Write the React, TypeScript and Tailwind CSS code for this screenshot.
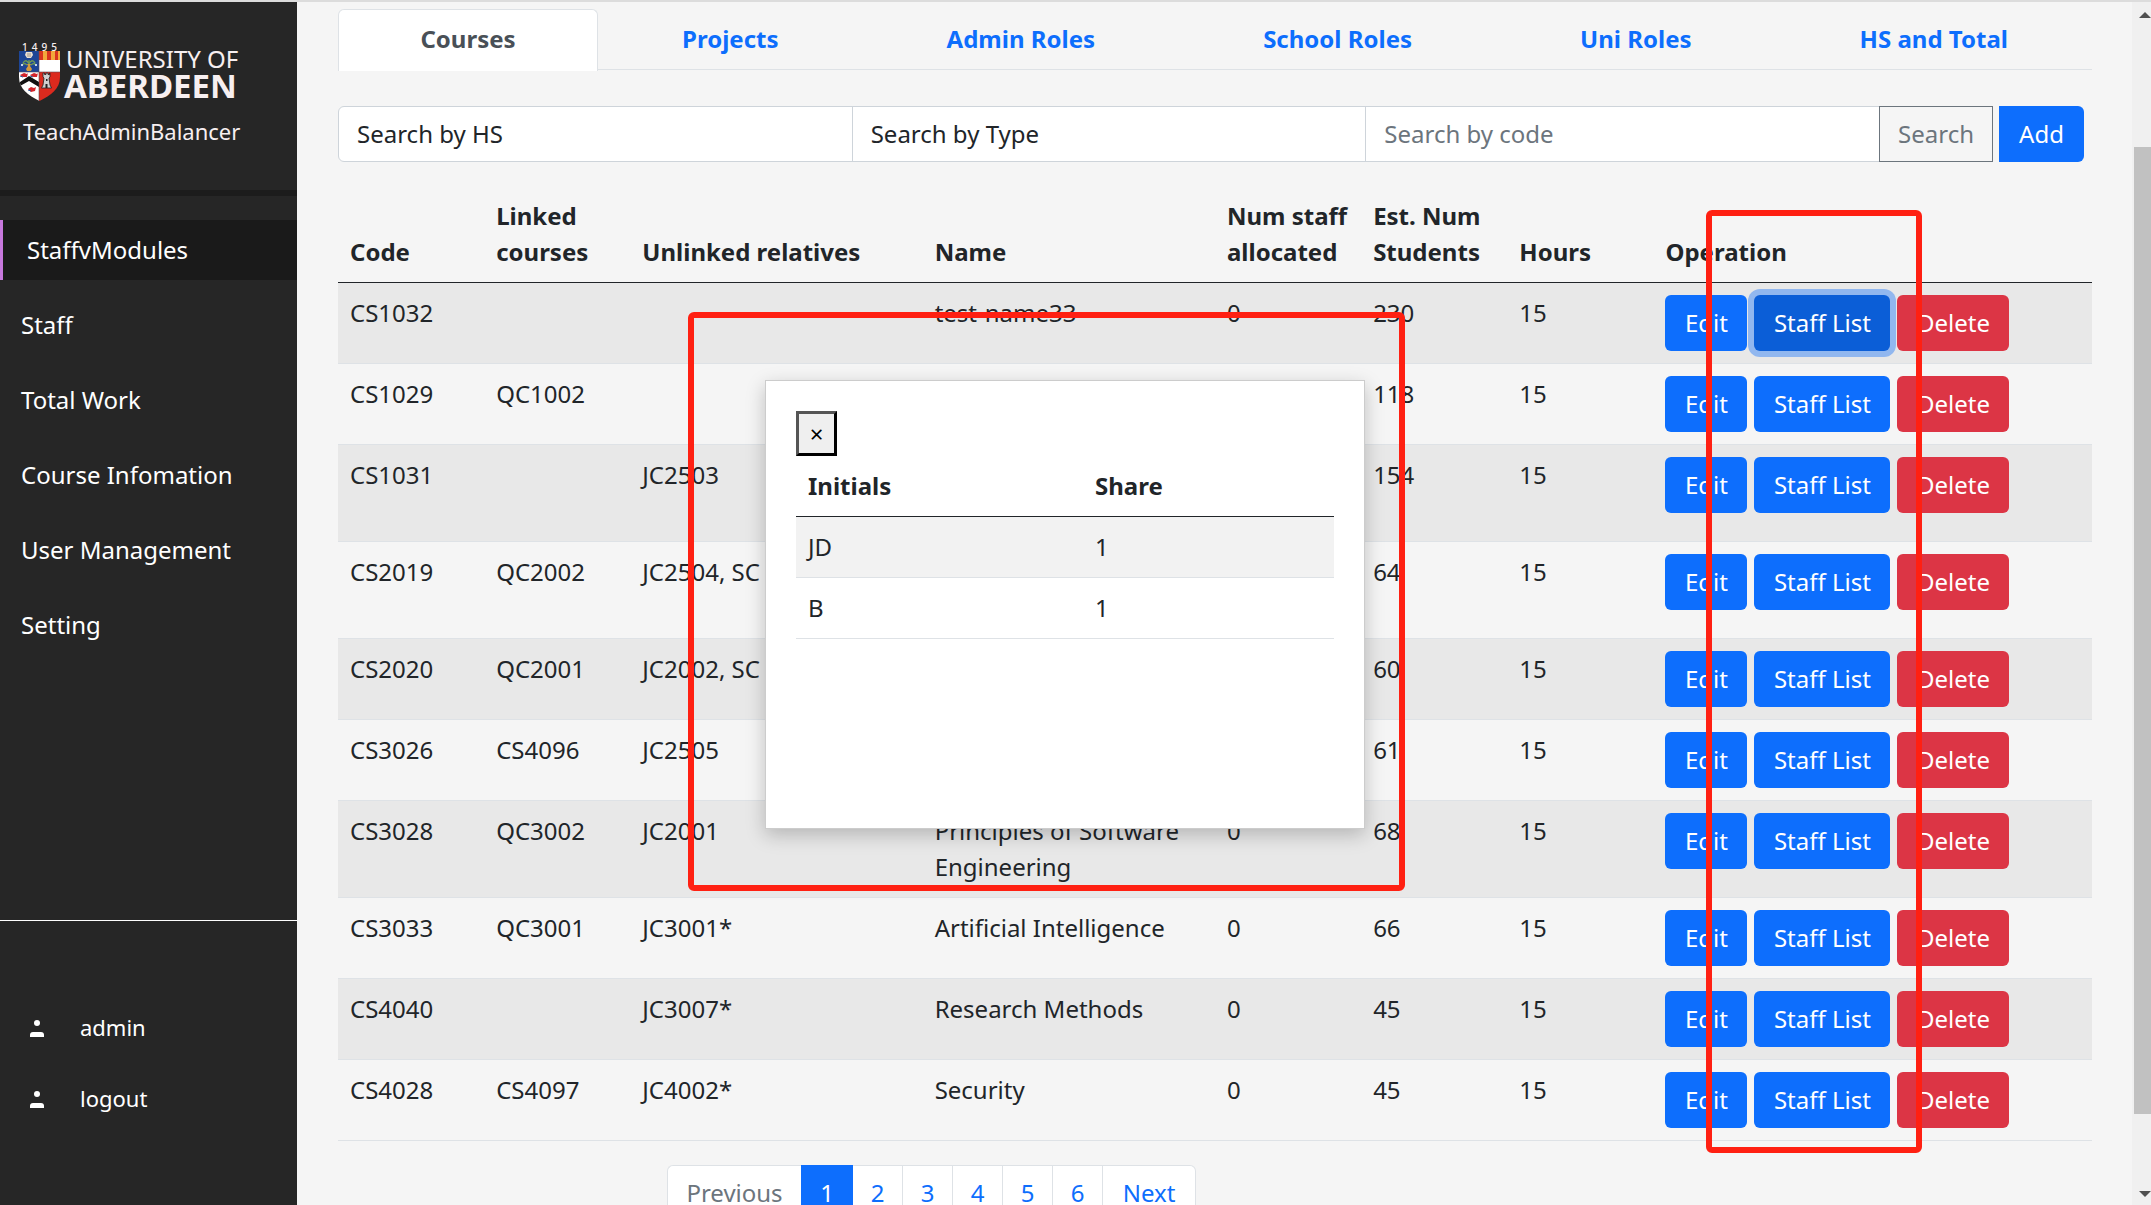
import React from "react";

type Course = {
  code: string;
  linked: string;
  unlinked: string;
  name: string;
  students: number;
  tall?: boolean;
};

const courses: Course[] = [
  { code: "CS1032", linked: "", unlinked: "", name: "test-name33", students: 230 },
  { code: "CS1029", linked: "QC1002", unlinked: "", name: "", students: 118 },
  { code: "CS1031", linked: "", unlinked: "JC2503", name: "", students: 154, tall: true },
  { code: "CS2019", linked: "QC2002", unlinked: "JC2504, SC", name: "", students: 64, tall: true },
  { code: "CS2020", linked: "QC2001", unlinked: "JC2002, SC", name: "", students: 60 },
  { code: "CS3026", linked: "CS4096", unlinked: "JC2505", name: "", students: 61 },
  { code: "CS3028", linked: "QC3002", unlinked: "JC2001", name: "Principles of Software Engineering", students: 68 },
  { code: "CS3033", linked: "QC3001", unlinked: "JC3001*", name: "Artificial Intelligence", students: 66 },
  { code: "CS4040", linked: "", unlinked: "JC3007*", name: "Research Methods", students: 45 },
  { code: "CS4028", linked: "CS4097", unlinked: "JC4002*", name: "Security", students: 45 },
];

const tabs = ["Projects", "Admin Roles", "School Roles", "Uni Roles", "HS and Total"];
const menu = ["Staff", "Total Work", "Course Infomation", "User Management", "Setting"];

function Crest() {
  return (
    <svg viewBox="0 0 41 50" className="h-[50px] w-[41px]" aria-hidden="true">
      <defs>
        <clipPath id="shield">
          <path d="M0 0H41V26C41 38 32 44 20.500 50C9 44 0 38 0 26Z" />
        </clipPath>
      </defs>
      <g clipPath="url(#shield)">
        <rect width="21" height="21" fill="#1d4596" />
        <rect x="20" width="21" height="9" fill="#f2a73b" />
        <path d="M20 0h4v9h-4zM28 0h4v9h-4zM36 0h3v9h-3z" fill="#d8331f" />
        <rect x="20" y="9" width="21" height="12" fill="#fff" />
        <rect y="21" width="20" height="29" fill="#fff" />
        <rect x="20" y="21" width="21" height="29" fill="#dc2a1e" />
        <path d="M7 1h6l1 3-2 3H8L6 4z" fill="#eadfd2" />
        <path d="M9 2v4M11 2v4" stroke="#8f8579" strokeWidth=".8" />
        <path d="M10 13Q7 7 4 12M10 13Q13 7 16 12M10 13V9M8 14Q4 11 3 15M12 14Q16 11 17 15" stroke="#6f9a56" strokeWidth="1.300" fill="none" />
        <path d="M8 13h4l-1 2 2 3-1 2H8l-1-2 2-3z" fill="#d59a3c" />
        <path d="M2 13h2v2H2zM16 13h2v2h-2z" fill="#c6d2e6" />
        <path d="M1 35V31L10 25L20 31V36L10 30Z" fill="#111" />
        <path d="M1 24l4-2 3 1 1-1-1 4-4 0zM11 24l4-2 3 1 1-1-1 4-4 0zM9 38l3-2 3 1 2-1-1 4-4 1z" fill="#d3242b" />
        <path d="M1 25l3 1M11 25l3 1M9 39l3 1" stroke="#34558f" />
        <path d="M24 22h1.500v1.500h1.500V22h2v1.500h1.500V22H31v4l-1 1 1 7 1.500 3h-10l1.500-3 1-7-1-1z" fill="#cfcfcf" stroke="#222" strokeWidth=".8" />
        <path d="M26.500 33h2v4h-2zM27 28h1.500v2H27z" fill="#222" />
        <path d="M20 0V50M0 21H41" stroke="#5a4a55" strokeWidth=".6" />
      </g>
    </svg>
  );
}

function Person() {
  return (
    <svg viewBox="0 0 14 17" className="mt-1 h-[17px] w-[14px]" fill="#fff" aria-hidden="true">
      <circle cx="7" cy="3" r="3" />
      <path d="M0 17V15Q0 12 3 12H11Q14 12 14 15V17Z" />
    </svg>
  );
}

function Sidebar() {
  return (
    <aside className="flex w-[297px] shrink-0 flex-col bg-[#262626] text-white">
      <div className="h-[194px] border-b-[6px] border-[#1c1c1c] pt-[41px] pl-[19px] text-[#f7eff0]">
        <div className="flex h-[58px] items-end gap-1">
          <div className="flex flex-col">
            <span className="flex h-2 items-center justify-between px-[3px] text-[10px] leading-none font-medium">
              <span>1</span>
              <span>4</span>
              <span>9</span>
              <span>5</span>
            </span>
            <Crest />
          </div>
          <div className="flex flex-col whitespace-nowrap">
            <span className="pl-[2px] text-[24px] leading-6">UNIVERSITY OF</span>
            <span className="text-[33px] leading-[30px] font-bold">ABERDEEN</span>
          </div>
        </div>
        <p className="mt-3 pl-1 text-[22px] leading-9">TeachAdminBalancer</p>
      </div>
      <nav className="flex flex-1 flex-col pt-6">
        <a href="#staffvmodules" className="flex h-[60px] items-center border-l-[3px] border-[#c678dd] bg-[#1a1a1a] pl-6">
          StaffvModules
        </a>
        {menu.map((item) => (
          <a key={item} href="#menu" className="mt-[15px] flex h-[60px] items-center pl-[21px]">
            {item}
          </a>
        ))}
      </nav>
      <div className="h-[285px] border-t border-white pt-[70px] text-[22px]">
        {["admin", "logout"].map((item) => (
          <a key={item} href={"#" + item} className="flex h-[71px] items-center gap-9 pl-[30px]">
            <Person />
            {item}
          </a>
        ))}
      </div>
    </aside>
  );
}

const button = "h-14 rounded-md text-white whitespace-nowrap";
const cell = "border-b border-[#dee2e6] py-3 pl-3";
const headCell = "border-b border-[#212529] py-3 pr-0 pl-3 font-bold";

function CourseTable() {
  return (
    <table className="mt-6 w-full table-fixed border-separate border-spacing-0 text-left">
      <colgroup>
        <col className="w-1/12" />
        <col className="w-1/12" />
        <col className="w-2/12" />
        <col className="w-2/12" />
        <col className="w-1/12" />
        <col className="w-1/12" />
        <col className="w-1/12" />
        <col className="w-3/12" />
      </colgroup>
      <thead>
        <tr className="align-bottom">
          {["Code", "Linked courses", "Unlinked relatives", "Name", "Num staff allocated", "Est. Num Students", "Hours", "Operation"].map((h) => (
            <th key={h} className={headCell}>
              {h}
            </th>
          ))}
        </tr>
      </thead>
      <tbody>
        {courses.map((c, i) => (
          <tr key={c.code} className={"align-top odd:bg-[#e8e8e8] " + (c.tall ? "h-[97px]" : "h-[81px]")}>
            <td className={cell}>{c.code}</td>
            <td className={cell}>{c.linked}</td>
            <td className={cell}>{c.unlinked}</td>
            <td className={cell}>{c.name}</td>
            <td className={cell}>0</td>
            <td className={cell}>{c.students}</td>
            <td className={cell}>15</td>
            <td className={cell}>
              <div className="flex gap-[7px]">
                <button className={button + " w-[82px] bg-[#0d6efd]"}>Edit</button>
                <button className={button + (i === 0 ? " w-[136px] bg-[#0b5ed7] ring-6 ring-[#91b7ef]" : " w-[136px] bg-[#0d6efd]")}>Staff List</button>
                <button className={button + " w-[112px] bg-[#dc3545]"}>Delete</button>
              </div>
            </td>
          </tr>
        ))}
      </tbody>
    </table>
  );
}

function StaffDialog() {
  return (
    <div className="pointer-events-none absolute inset-0 top-0.5 right-[21px] flex items-center justify-center">
      <div role="dialog" aria-label="Staff list" className="pointer-events-auto h-[449px] w-[600px] border border-[#ccc] bg-white p-[30px] shadow-[0_6px_18px_rgba(0,0,0,0.22)]">
        <button aria-label="Close" className="flex h-[45px] w-[41px] items-center justify-center border-3 border-t-[#555] border-r-black border-b-black border-l-[#555] bg-[#efefef] text-[24px] text-black">
          ×
        </button>
        <table className="w-full table-fixed border-separate border-spacing-0 text-left">
          <thead>
            <tr>
              <th className={headCell + " w-[287px]"}>Initials</th>
              <th className={headCell}>Share</th>
            </tr>
          </thead>
          <tbody>
            {["JD", "B"].map((s) => (
              <tr key={s} className="odd:bg-[#f2f2f2]">
                <td className={cell}>{s}</td>
                <td className={cell}>1</td>
              </tr>
            ))}
          </tbody>
        </table>
      </div>
    </div>
  );
}

export default function App() {
  return (
    <div className="relative flex h-screen overflow-hidden border-t-2 border-[#dcdcdc] bg-[#f5f5f5] font-['Noto_Sans','Open_Sans',sans-serif] text-[24px] leading-9 text-[#212529]">
      <Sidebar />
      <main className="min-w-0 flex-1 px-[41px] pr-10 pt-[7px]">
        <nav className="flex h-[61px] border-b border-[#dee2e6] text-center font-bold">
          <a href="#courses" className="h-[62px] w-[260px] rounded-t-md border border-b-0 border-[#dee2e6] bg-white pt-[11px] text-[#495057]">
            Courses
          </a>
          {tabs.map((t) => (
            <a key={t} href="#tab" className="flex-auto px-6 pt-3 text-[#0d6efd]">
              {t}
            </a>
          ))}
        </nav>
        <form className="mt-9 flex h-14 pr-2">
          <select aria-label="Search by HS" className="min-w-0 flex-1 appearance-none rounded-l-md border border-[#ced4da] bg-white px-[18px]">
            <option>Search by HS</option>
          </select>
          <select aria-label="Search by Type" className="-ml-px min-w-0 flex-1 appearance-none border border-[#ced4da] bg-white px-[18px]">
            <option>Search by Type</option>
          </select>
          <input aria-label="Search by code" placeholder="Search by code" className="-ml-px min-w-0 flex-1 border border-[#ced4da] bg-white px-[18px] placeholder:text-[#6c757d]" />
          <button type="button" className="-ml-px w-[114px] border border-[#6c757d] text-[#6c757d]">
            Search
          </button>
          <button type="button" className="ml-1.5 w-[85px] rounded-r-md bg-[#0d6efd] text-white">
            Add
          </button>
        </form>
        <CourseTable />
        <nav aria-label="Pages" className="mt-6 ml-[329px] flex w-fit">
          <a href="#prev" className="flex h-14 w-[134px] items-center justify-center rounded-l-md border border-r-0 border-[#dee2e6] bg-white text-[#6c757d]">
            Previous
          </a>
          <a href="#p1" className="flex h-14 w-[52px] items-center justify-center bg-[#0d6efd] text-white">
            1
          </a>
          {[2, 3, 4, 5, 6].map((n) => (
            <a key={n} href={"#p" + n} className="flex h-14 w-[50px] items-center justify-center border-y border-r border-[#dee2e6] bg-white text-[#0d6efd]">
              {n}
            </a>
          ))}
          <a href="#next" className="flex h-14 w-[93px] items-center justify-center rounded-r-md border border-l-0 border-[#dee2e6] bg-white text-[#0d6efd]">
            Next
          </a>
        </nav>
      </main>
      <div className="flex w-[19px] shrink-0 flex-col items-end bg-[#f0f0f0]" aria-hidden="true">
        <svg viewBox="0 0 12 6" className="mt-2.5 h-1.5 w-3" fill="#505050">
          <path d="M0 6L6 0L12 6Z" />
        </svg>
        <div className="mt-[129px] h-[967px] w-[17px] bg-[#c1c1c1]" />
        <svg viewBox="0 0 12 6" className="mt-auto mb-2 h-1.5 w-3" fill="#505050">
          <path d="M0 0L6 6L12 0Z" />
        </svg>
      </div>
      <StaffDialog />
      <div className="pointer-events-none absolute top-[310px] left-[688px] h-[579px] w-[717px] rounded-md border-6 border-[#ff2012]" />
      <div className="pointer-events-none absolute top-[208px] left-[1706px] h-[943px] w-[216px] rounded-md border-6 border-[#ff2012]" />
    </div>
  );
}
